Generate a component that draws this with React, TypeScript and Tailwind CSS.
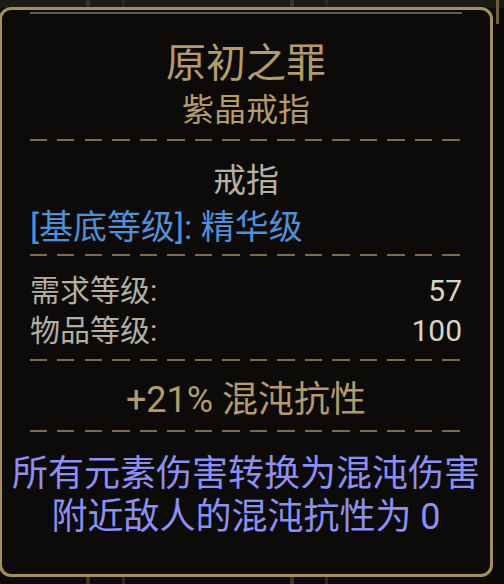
import React from 'react';

const dash =
  'h-[2px] mx-[28px] bg-[repeating-linear-gradient(90deg,#7b6b4e_0_17px,transparent_17px_27.5px)]';

const font = { fontFamily: 'Roboto, "Noto Sans CJK SC", "Noto Sans", sans-serif' };

const StatRow: React.FC<{ label: string; value: string }> = ({ label, value }) => (
  <div className="flex justify-between items-center h-[40px] text-[30px] leading-[40px]">
    <span className="text-[#b3afa4]">{label}</span>
    <span className="text-[#d9d4c2]">{value}</span>
  </div>
);

const App: React.FC = () => {
  return (
    <div className="relative w-[504px] h-[584px] bg-[#0b0a08] overflow-hidden" style={font}>
      {/* background slots peeking around the tooltip */}
      <div className="absolute inset-x-0 top-0 h-[8px] bg-[#1b1c16]" />
      <div className="absolute left-[86px] top-0 w-[4px] h-full bg-[#3a3424]" />
      <div className="absolute left-[122px] top-0 w-[3px] h-full bg-[#2c281d]" />
      <div className="absolute left-[290px] top-0 w-[4px] h-full bg-[#3a3424]" />
      <div className="absolute left-[325px] top-0 w-[3px] h-full bg-[#2c281d]" />
      <div className="absolute right-[5px] top-0 w-[3px] h-[24px] bg-[#6d5e3c]" />

      <div className="relative ml-[-1px] mt-[7px] w-[494px] h-[570px] rounded-[12px] border-[3px] border-[#a68d5c] bg-[#0c0b09] flex flex-col">
        <div className="h-[2px] mt-[2px] mx-[28px] bg-[#5e5d58]" />

        <div className="mt-[28px] text-center text-[40px] leading-[44px] text-[#b59a6a]">原初之罪</div>
        <div className="mt-[6px] text-center text-[32px] leading-[36px] text-[#b59a6a]">紫晶戒指</div>

        <div className={`mt-[11px] ${dash}`} />

        <div className="mt-[22px] text-center text-[33px] leading-[36px] text-[#b5b1a6]">戒指</div>
        <div className="mt-[10px] px-[28px] text-[34px] leading-[36px] text-[#4f90d8]">[基底等级]: 精华级</div>

        <div className={`mt-[9px] ${dash}`} />

        <div className="mt-[15px] px-[28px] flex flex-col">
          <StatRow label="需求等级:" value="57" />
          <StatRow label="物品等级:" value="100" />
        </div>

        <div className={`mt-[8px] ${dash}`} />

        <div className="mt-[19px] text-center text-[36px] leading-[40px] text-[#b59a6a]">+21% 混沌抗性</div>

        <div className={`mt-[10px] ${dash}`} />

        <div className="mt-[21px] flex flex-col items-center text-[36px] leading-[43px] text-[#8c8ff3] whitespace-nowrap">
          <div>所有元素伤害转换为混沌伤害</div>
          <div>附近敌人的混沌抗性为 0</div>
        </div>
      </div>
    </div>
  );
};

export default App;
